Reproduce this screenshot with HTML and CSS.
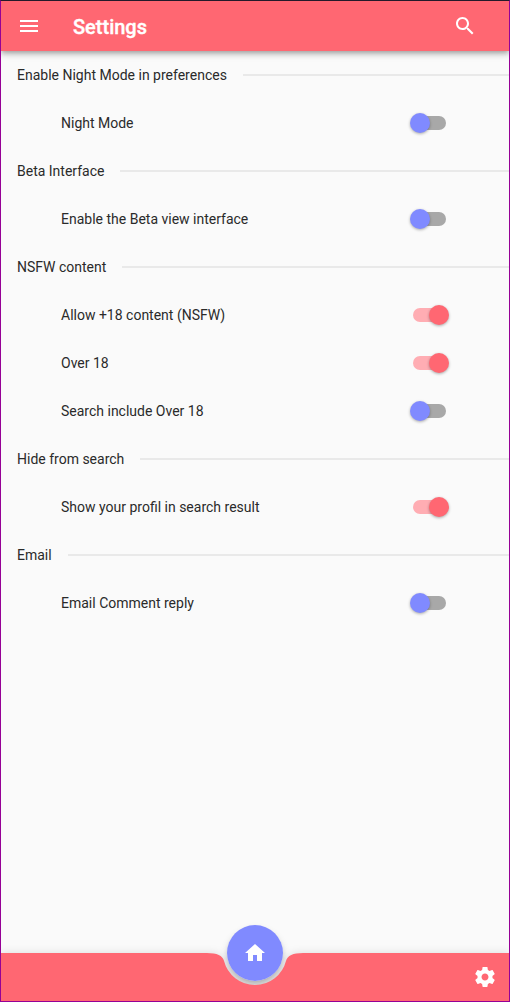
FILE: index.html
```html
<!DOCTYPE html>
<html lang="en">
<head>
<meta charset="utf-8">
<title>Settings</title>
<link rel="stylesheet" href="styles.css">
</head>
<body>
<div class="app">
  <header class="bar">
    <svg class="icon" viewBox="0 0 24 24"><path d="M3 18h18v-2H3v2zm0-5h18v-2H3v2zm0-7v2h18V6H3z"/></svg>
    <h1 class="title">Settings</h1>
    <svg class="icon" viewBox="0 0 24 24"><path d="M15.5 14h-.79l-.28-.27C15.41 12.59 16 11.11 16 9.5 16 5.91 13.09 3 9.5 3S3 5.91 3 9.5 5.91 16 9.5 16c1.61 0 3.09-.59 4.23-1.57l.27.28v.79l5 4.99L20.49 19l-4.99-5zm-6 0C7.01 14 5 11.99 5 9.5S7.01 5 9.5 5 14 7.01 14 9.5 11.99 14 9.5 14z"/></svg>
  </header>
  <main class="list">
    <h2 class="section">Enable Night Mode in preferences</h2>
    <div class="row">Night Mode<span class="switch"></span></div>
    <h2 class="section">Beta Interface</h2>
    <div class="row">Enable the Beta view interface<span class="switch"></span></div>
    <h2 class="section">NSFW content</h2>
    <div class="row">Allow +18 content (NSFW)<span class="switch on"></span></div>
    <div class="row">Over 18<span class="switch on"></span></div>
    <div class="row">Search include Over 18<span class="switch"></span></div>
    <h2 class="section">Hide from search</h2>
    <div class="row">Show your profil in search result<span class="switch on"></span></div>
    <h2 class="section">Email</h2>
    <div class="row">Email Comment reply<span class="switch"></span></div>
  </main>
  <footer class="bottom">
    <div class="fab-shadow"></div>
    <svg class="notched" viewBox="0 0 508 48"><path d="M0 0H206Q221 0 222.97 7.82A32 32 0 0 0 285.03 7.82Q287 0 302 0H508V48H0z"/></svg>
    <div class="fab"><svg class="home" viewBox="0 0 24 24"><path d="M10 20v-6h4v6h5v-8h3L12 3 2 12h3v8z"/></svg></div>
    <svg class="icon gear" viewBox="0 0 24 24"><path d="M19.43 12.98c.04-.32.07-.64.07-.98s-.03-.66-.07-.98l2.11-1.65c.19-.15.24-.42.12-.64l-2-3.46c-.12-.22-.39-.3-.61-.22l-2.49 1c-.52-.4-1.08-.73-1.69-.98l-.38-2.65C14.46 2.18 14.25 2 14 2h-4c-.25 0-.46.18-.49.42l-.38 2.65c-.61.25-1.17.59-1.69.98l-2.49-1c-.23-.09-.49 0-.61.22l-2 3.46c-.13.22-.07.49.12.64l2.11 1.65c-.04.32-.07.65-.07.98s.03.66.07.98l-2.11 1.65c-.19.15-.24.42-.12.64l2 3.46c.12.22.39.3.61.22l2.49-1c.52.4 1.08.73 1.69.98l.38 2.65c.03.24.24.42.49.42h4c.25 0 .46-.18.49-.42l.38-2.65c.61-.25 1.17-.59 1.69-.98l2.49 1c.23.09.49 0 .61-.22l2-3.46c.12-.22.07-.49-.12-.64l-2.11-1.65zM12 15.5c-1.93 0-3.5-1.57-3.5-3.5s1.57-3.5 3.5-3.5 3.5 1.57 3.5 3.5-1.57 3.5-3.5 3.5z"/></svg>
  </footer>
</div>
</body>
</html>
```
FILE: styles.css
```css
* { box-sizing: border-box; }
body { margin: 0; font-family: Roboto, sans-serif; }
.app {
  display: flex;
  flex-direction: column;
  height: 1002px;
  border: 1px solid #960096;
  border-top-color: #241a2a;
  background: #fafafa;
  color: #2a2a2a;
  overflow: hidden;
}
.bar {
  display: flex;
  align-items: center;
  flex: none;
  height: 50px;
  padding: 0 32px 0 16px;
  background: #ff6772;
  box-shadow: 0 2px 4px -1px rgba(0,0,0,.2), 0 4px 5px rgba(0,0,0,.14), 0 1px 10px rgba(0,0,0,.12);
  z-index: 1;
}
.icon { display: block; width: 24px; height: 24px; fill: #fff; }
.title { flex: 1; margin: 2px 0 0 32px; font-size: 20px; font-weight: 500; line-height: 24px; -webkit-text-stroke: .35px #fff; color: #fff; }
.list { flex: 1; }
.section, .row { display: flex; align-items: center; height: 48px; margin: 0; font-size: 14px; font-weight: 400; }
.section { padding-left: 16px; gap: 16px; }
.section::after { content: ""; flex: 1; height: 2px; background: #e9e9e9; }
.row { justify-content: space-between; padding: 0 60px; }
.switch { position: relative; display: flex; align-items: center; width: 39px; height: 20px; }
.switch::before { content: ""; width: 33px; height: 14px; margin-left: 3px; border-radius: 7px; background: #a8a8a8; }
.switch::after { content: ""; position: absolute; left: 0; top: 0; width: 20px; height: 20px; border-radius: 50%; background: #808aff; box-shadow: 0 1px 3px rgba(0,0,0,.32); }
.on::before { background: #ffadb3; }
.on::after { left: 19px; background: #ff6772; }
.bottom { position: relative; flex: none; display: flex; align-items: center; justify-content: flex-end; height: 48px; padding-right: 12px; }
.notched { position: absolute; left: 0; top: 0; width: 508px; height: 48px; fill: #ff6772; overflow: visible; filter: drop-shadow(0 0 4px rgba(0,0,0,.12)); }
.gear { position: relative; }
.fab, .fab-shadow { position: absolute; left: 226px; top: -28px; width: 56px; height: 56px; border-radius: 50%; }
.fab-shadow { box-shadow: 0 3px 5px -1px rgba(0,0,0,.18), 0 5px 9px rgba(0,0,0,.14); }
.fab { display: flex; align-items: center; justify-content: center; background: #808aff; }
.home { width: 24px; height: 24px; fill: #fff; }
```
